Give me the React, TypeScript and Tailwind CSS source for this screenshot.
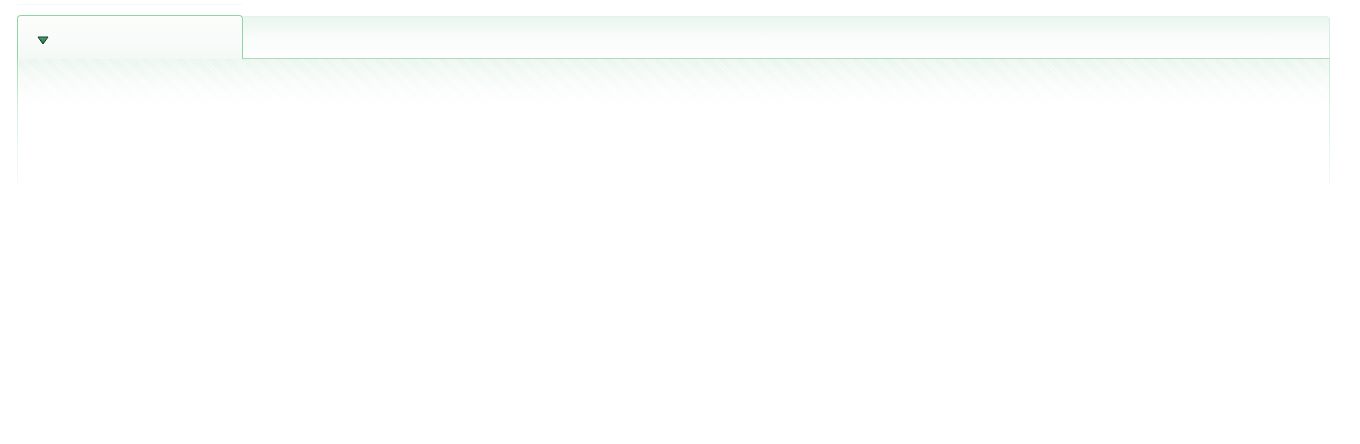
import React from 'react';

const App = () => {
  return (
    <div className="w-[1360px] h-[444px] bg-white pt-[4px] pl-[17px] pr-[30px]">
      {/* faint ghost line above the tab */}
      <div className="mb-[10px] h-px w-[225px] bg-[#f6faf7]" />

      <div className="flex flex-col h-[168px]">
        {/* header row */}
        <div className="flex h-[44px]">
          {/* active tab */}
          <div className="w-[226px] h-[44px] rounded-t-[4px] border border-b-0 border-[#8ed4a4] bg-[linear-gradient(to_bottom,#fbfdfb_0px,#f8fbf9_60%,#f3f9f5_100%)] pl-[19px] pt-[20px]">
            <svg width="12" height="9" viewBox="0 0 12 9" className="block">
              <defs>
                <linearGradient id="tri" x1="0" y1="0" x2="0" y2="1">
                  <stop offset="0" stopColor="#4fa56f" />
                  <stop offset="1" stopColor="#1e6a3c" />
                </linearGradient>
              </defs>
              <polygon points="1,1 11,1 6,8" fill="url(#tri)" stroke="#123d24" strokeWidth="1" strokeLinejoin="round" />
            </svg>
          </div>
          {/* rest of the header bar */}
          <div className="flex-1 mt-px rounded-tr-[4px] border border-l-0 border-t-[#e4f2e9] border-r-[#d8efe0] border-b-[#a6dfb7] bg-gradient-to-b from-[#e9f5ee] via-[#f9fcfa] to-[#fdfefd]" />
        </div>

        {/* body */}
        <div className="flex flex-1">
          <div className="w-px bg-gradient-to-b from-[#9fdab1] via-[#dff2e5] to-[#f3faf5]" />
          <div className="flex-1 bg-[linear-gradient(to_bottom,rgba(255,255,255,0)_0px,#ffffff_48px),repeating-linear-gradient(45deg,rgba(190,225,202,0.2)_0px,rgba(190,225,202,0.2)_1px,transparent_1px,transparent_2px),linear-gradient(to_bottom,#f3f9f5,#ffffff_50px)]" />
          <div className="w-px bg-gradient-to-b from-[#cbeed6] to-[#f1f9f3]" />
        </div>
      </div>
    </div>
  );
};

export default App;
